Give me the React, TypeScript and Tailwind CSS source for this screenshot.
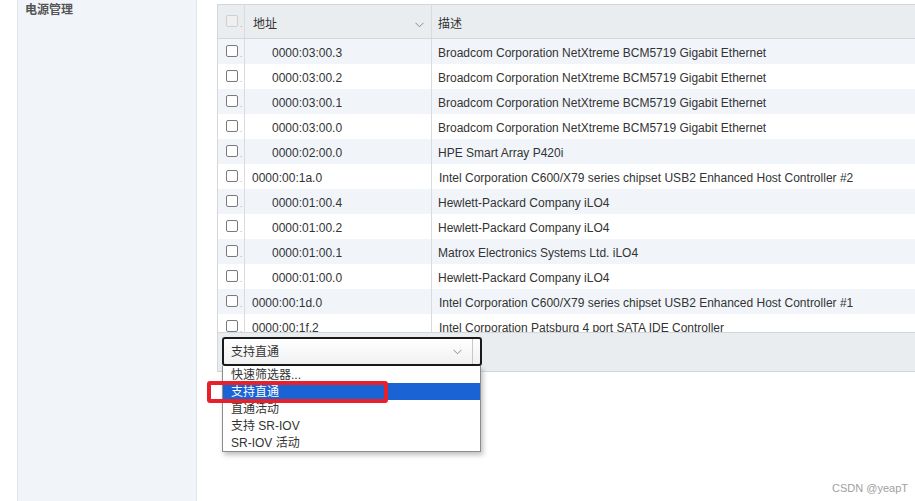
import React from "react";

// PCI 设备列表
const devices = [
  { addr: "0000:03:00.3", child: true, desc: "Broadcom Corporation NetXtreme BCM5719 Gigabit Ethernet" },
  { addr: "0000:03:00.2", child: true, desc: "Broadcom Corporation NetXtreme BCM5719 Gigabit Ethernet" },
  { addr: "0000:03:00.1", child: true, desc: "Broadcom Corporation NetXtreme BCM5719 Gigabit Ethernet" },
  { addr: "0000:03:00.0", child: true, desc: "Broadcom Corporation NetXtreme BCM5719 Gigabit Ethernet" },
  { addr: "0000:02:00.0", child: true, desc: "HPE Smart Array P420i" },
  { addr: "0000:00:1a.0", child: false, desc: "Intel Corporation C600/X79 series chipset USB2 Enhanced Host Controller #2" },
  { addr: "0000:01:00.4", child: true, desc: "Hewlett-Packard Company iLO4" },
  { addr: "0000:01:00.2", child: true, desc: "Hewlett-Packard Company iLO4" },
  { addr: "0000:01:00.1", child: true, desc: "Matrox Electronics Systems Ltd. iLO4" },
  { addr: "0000:01:00.0", child: true, desc: "Hewlett-Packard Company iLO4" },
  { addr: "0000:00:1d.0", child: false, desc: "Intel Corporation C600/X79 series chipset USB2 Enhanced Host Controller #1" },
  { addr: "0000:00:1f.2", child: false, desc: "Intel Corporation Patsburg 4 port SATA IDE Controller" },
];

const filterOptions = ["快速筛选器...", "支持直通", "直通活动", "支持 SR-IOV", "SR-IOV 活动"];

const Chevron = ({ className = "" }: { className?: string }) => (
  <svg className={className} width="9" height="6" viewBox="0 0 9 6" fill="none">
    <path d="M0.5 0.8 L4.5 4.8 L8.5 0.8" stroke="#8a8a8a" strokeWidth="1" />
  </svg>
);

const CheckCell = ({ disabled = false }: { disabled?: boolean }) => (
  <div className="flex w-[27px] shrink-0 items-center border-r border-[#d9dcdf] pl-[8px]">
    <span
      className={
        disabled
          ? "mt-[-2px] h-[12px] w-[12px] rounded-[2px] border border-[#cfcfcf] bg-[#f0f0f0]"
          : "mt-[-2px] h-[12px] w-[12px] rounded-[2px] border border-[#7a7a7a] bg-white"
      }
    />
    <span className="ml-[2px] mt-[6px] text-[8px] leading-none text-[#888]">.</span>
  </div>
);

export default function App() {
  return (
    <div className="relative flex h-[501px] w-[915px] overflow-hidden bg-white font-['Liberation_Sans','Noto_Sans_CJK_SC',sans-serif] text-[12px] text-[#333]">
      <div className="w-[17px] shrink-0" />
      <aside className="w-[180px] shrink-0 border-x border-[#e2e6eb] bg-[#f1f4f9] px-[7px] pt-[1px] font-bold text-[#555]">
        电源管理
      </aside>

      <div className="ml-[20px] mt-[4px] flex min-w-0 flex-1 flex-col">
        <div className="border-l border-t border-[#d4d7da]">
          {/* 表头 */}
          <div className="flex h-[34px] border-b border-[#d4d7da] bg-[#eaedf0]">
            <CheckCell disabled />
            <div className="flex w-[187px] shrink-0 items-center justify-between border-r border-[#d9dcdf] pl-[8px] pr-[7px] pt-[5px]">
              <span>地址</span>
              <Chevron className="mt-[1px]" />
            </div>
            <div className="flex flex-1 items-center pl-[6px] pt-[5px]">描述</div>
          </div>

          {/* 列表 */}
          <div className="h-[293px] overflow-hidden">
            {devices.map((d, i) => (
              <div
                key={d.addr}
                className={i % 2 === 0 ? "flex h-[25px] bg-[#f1f5fa]" : "flex h-[25px] bg-white"}
              >
                <CheckCell />
                <div
                  className={
                    d.child
                      ? "flex w-[187px] shrink-0 items-center border-r border-[#d9dcdf] pl-[27px] pt-[2px]"
                      : "flex w-[187px] shrink-0 items-center border-r border-[#d9dcdf] pl-[7px] pt-[2px]"
                  }
                >
                  {d.addr}
                </div>
                <div
                  className={
                    d.child
                      ? "flex flex-1 items-center whitespace-nowrap pl-[6px] pt-[2px]"
                      : "flex flex-1 items-center whitespace-nowrap pl-[7px] pt-[2px]"
                  }
                >
                  {d.desc}
                </div>
              </div>
            ))}
          </div>
        </div>

        {/* 工具栏 */}
        <div className="h-[40px] border border-r-0 border-[#d4d7da] bg-[#eaedf0] p-[4px]">
          <div className="flex h-[29px] w-[260px] items-stretch rounded-[3px] border-2 border-[#1a1a1a] bg-gradient-to-b from-white to-[#f1f1f1]">
            <div className="flex flex-1 items-center justify-between pl-[7px] pr-[10px]">
              <span>支持直通</span>
              <Chevron />
            </div>
            <div className="w-[8px] border-l border-[#c8c8c8]" />
          </div>
        </div>
      </div>

      {/* 下拉列表 */}
      <div className="absolute left-[222px] top-[366px] w-[259px] border border-t-0 border-[#8c8c8c] bg-white shadow-[2px_3px_5px_rgba(0,0,0,0.25)]">
        {filterOptions.map((o, i) => (
          <div
            key={o}
            className={
              i === 1
                ? "flex h-[17px] items-center bg-[#1a63d5] pl-[8px] text-white"
                : "flex h-[17px] items-center pl-[8px] text-[#333]"
            }
          >
            {o}
          </div>
        ))}
      </div>

      {/* 标注框 */}
      <div className="absolute left-[207px] top-[381px] h-[22px] w-[181px] rounded-[3px] border-4 border-[#e8202b]" />

      <div className="absolute left-[832px] top-[480px] text-[11px] text-[#a0a0a0]">CSDN @yeapT</div>
    </div>
  );
}
